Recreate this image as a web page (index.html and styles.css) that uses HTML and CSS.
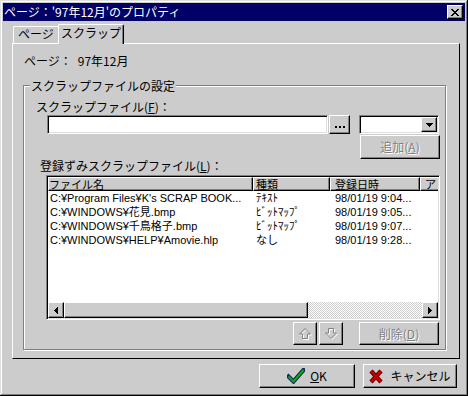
FILE: index.html
```html
<!DOCTYPE html>
<html lang="ja">
<head>
<meta charset="utf-8">
<title>ページ：'97年12月'のプロパティ</title>
<link rel="stylesheet" href="styles.css">
</head>
<body>
<div class="window">
  <div class="titlebar">
    <span class="title">ページ：'97年12月'のプロパティ</span>
    <button class="raised close-btn" aria-label="閉じる">
      <svg width="8" height="7" viewBox="0 0 8 7" shape-rendering="crispEdges">
        <rect x="0" y="0" width="2" height="1"/><rect x="6" y="0" width="2" height="1"/>
        <rect x="1" y="1" width="2" height="1"/><rect x="5" y="1" width="2" height="1"/>
        <rect x="2" y="2" width="4" height="1"/>
        <rect x="3" y="3" width="2" height="1"/>
        <rect x="2" y="4" width="4" height="1"/>
        <rect x="1" y="5" width="2" height="1"/><rect x="5" y="5" width="2" height="1"/>
        <rect x="0" y="6" width="2" height="1"/><rect x="6" y="6" width="2" height="1"/>
      </svg>
    </button>
  </div>

  <div class="tabs">
    <div class="tab first">ページ</div>
    <div class="tab active">スクラップ</div>
  </div>

  <div class="panel">
    <div class="pageline"><span>ページ：</span><span class="pageval">97年12月</span></div>

    <fieldset class="group">
      <legend class="group-title">スクラップファイルの設定</legend>

      <div class="label l1">スクラップファイル(<u>F</u>)：</div>
      <div class="filerow">
        <div class="sunken textbox"></div>
        <button class="raised browse" aria-label="参照">
          <svg width="10" height="2" viewBox="0 0 10 2" shape-rendering="crispEdges">
            <rect x="0" y="0" width="2" height="2"/><rect x="4" y="0" width="2" height="2"/><rect x="8" y="0" width="2" height="2"/>
          </svg>
        </button>
        <div class="sunken combo">
          <span class="raised combo-btn">
            <svg width="7" height="4" viewBox="0 0 7 4" shape-rendering="crispEdges">
              <rect x="0" y="0" width="7" height="1"/><rect x="1" y="1" width="5" height="1"/>
              <rect x="2" y="2" width="3" height="1"/><rect x="3" y="3" width="1" height="1"/>
            </svg>
          </span>
        </div>
      </div>
      <button class="raised add disabled" disabled>追加(<u>A</u>)</button>

      <div class="label l2">登録ずみスクラップファイル(<u>L</u>)：</div>
      <div class="sunken list">
        <div class="lv-header">
          <div class="hcell c1">ファイル名</div>
          <div class="hcell c2">種類</div>
          <div class="hcell c3">登録日時</div>
          <div class="hcell c4">ア</div>
        </div>
        <div class="lv-body">
          <div class="row"><span class="c1">C:¥Program Files¥K's SCRAP BOOK...</span><span class="c2">ﾃｷｽﾄ</span><span class="c3">98/01/19 9:04...</span></div>
          <div class="row"><span class="c1">C:¥WINDOWS¥花見.bmp</span><span class="c2">ﾋﾞｯﾄﾏｯﾌﾟ</span><span class="c3">98/01/19 9:05...</span></div>
          <div class="row"><span class="c1">C:¥WINDOWS¥千鳥格子.bmp</span><span class="c2">ﾋﾞｯﾄﾏｯﾌﾟ</span><span class="c3">98/01/19 9:07...</span></div>
          <div class="row"><span class="c1">C:¥WINDOWS¥HELP¥Amovie.hlp</span><span class="c2">なし</span><span class="c3">98/01/19 9:28...</span></div>
        </div>
        <div class="hscroll">
          <span class="raised sbtn">
            <svg width="4" height="7" viewBox="0 0 4 7" shape-rendering="crispEdges">
              <rect x="3" y="0" width="1" height="7"/><rect x="2" y="1" width="1" height="5"/>
              <rect x="1" y="2" width="1" height="3"/><rect x="0" y="3" width="1" height="1"/>
            </svg>
          </span>
          <span class="raised thumb"></span>
          <span class="track"></span>
          <span class="raised sbtn">
            <svg width="4" height="7" viewBox="0 0 4 7" shape-rendering="crispEdges">
              <rect x="0" y="0" width="1" height="7"/><rect x="1" y="1" width="1" height="5"/>
              <rect x="2" y="2" width="1" height="3"/><rect x="3" y="3" width="1" height="1"/>
            </svg>
          </span>
        </div>
      </div>

      <div class="listbtns">
        <button class="raised arrowbtn" disabled aria-label="上へ">
          <svg width="13" height="12" viewBox="0 0 13 12">
            <polygon transform="translate(1,1)" points="6,0.5 11.5,6 8.5,6 8.5,10.5 3.5,10.5 3.5,6 0.5,6" fill="none" stroke="#fff"/>
            <polygon points="6,0.5 11.5,6 8.5,6 8.5,10.5 3.5,10.5 3.5,6 0.5,6" fill="none" stroke="#808080"/>
          </svg>
        </button>
        <button class="raised arrowbtn down" disabled aria-label="下へ">
          <svg width="13" height="12" viewBox="0 0 13 12">
            <polygon transform="translate(1,1)" points="3.5,0.5 8.5,0.5 8.5,5 11.5,5 6,10.5 0.5,5 3.5,5" fill="none" stroke="#fff"/>
            <polygon points="3.5,0.5 8.5,0.5 8.5,5 11.5,5 6,10.5 0.5,5 3.5,5" fill="none" stroke="#808080"/>
          </svg>
        </button>
        <button class="raised del disabled" disabled>削除(<u>D</u>)</button>
      </div>
    </fieldset>
  </div>

  <div class="footer">
    <button class="raised dlgbtn ok">
      <svg width="18" height="16" viewBox="0 0 18 16">
        <path d="M1.5 8.5 L6.5 13.5 L16.5 2" fill="none" stroke="#10285a" stroke-width="4.2" stroke-linecap="square"/>
        <path d="M1.5 8.5 L6.5 13.5 L16.5 2" fill="none" stroke="#10a818" stroke-width="2"/>
      </svg>
      <span><u>O</u>K</span>
    </button>
    <button class="raised dlgbtn cancel">
      <svg width="14" height="15" viewBox="0 0 14 15">
        <path d="M2 2 L12 13 M12 2 L2 13" fill="none" stroke="#700000" stroke-width="4.4"/>
        <path d="M2 2 L12 13 M12 2 L2 13" fill="none" stroke="#c80000" stroke-width="2"/>
      </svg>
      <span>キャンセル</span>
    </button>
  </div>
</div>
</body>
</html>
```

FILE: styles.css
```css
* { box-sizing: border-box; }
html, body { margin: 0; padding: 0; }
body {
  width: 468px;
  height: 396px;
  overflow: hidden;
  background: #cccccc;
  font-family: "Noto Sans CJK JP", "Noto Sans", sans-serif;
  font-size: 12px;
  line-height: 14px;
  color: #000;
}
button {
  font: inherit;
  color: inherit;
  margin: 0;
  padding: 0;
  background: #cccccc;
}
u { text-decoration: underline; text-underline-offset: 1px; }

.window {
  width: 468px;
  height: 396px;
  padding: 3px;
  background: #cccccc;
  box-shadow: inset -1px -1px 0 #000, inset 1px 1px 0 #dfdfdf,
              inset -2px -2px 0 #808080, inset 2px 2px 0 #fff;
  display: flex;
  flex-direction: column;
}

.raised {
  border: 1px solid;
  border-color: #fff #000 #000 #fff;
  box-shadow: inset -1px -1px 0 #808080;
  background: #cccccc;
}
.sunken {
  border: 1px solid;
  border-color: #808080 #fff #fff #808080;
  box-shadow: inset 1px 1px 0 #000, inset -1px -1px 0 #dfdfdf;
  background: #fff;
}
.disabled { color: #808080; text-shadow: 1px 1px 0 #fff; }

/* title bar */
.titlebar {
  height: 18px;
  background: #000066;
  color: #fff;
  display: flex;
  align-items: center;
  justify-content: space-between;
  padding: 0 2px 0 1px;
  flex-shrink: 0;
}
.title { line-height: 18px; white-space: nowrap; }
.close-btn {
  width: 16px;
  height: 14px;
  display: flex;
  align-items: center;
  justify-content: center;
  padding-right: 1px;
}

/* tabs */
.tabs {
  display: flex;
  align-items: flex-end;
  height: 19px;
  margin: 3px 0 0 10px;
  flex-shrink: 0;
}
.tab {
  height: 17px;
  border-top: 1px solid #fff;
  border-left: 1px solid #fff;
  border-right: 1px solid #000;
  box-shadow: inset -1px 0 0 #808080;
  border-radius: 2px 2px 0 0;
  display: flex;
  align-items: center;
  justify-content: center;
  padding-bottom: 2px;
  white-space: nowrap;
}
.tab.first {
  width: 45px;
  border-right: none;
  box-shadow: none;
  border-top-right-radius: 0;
}
.tab.active {
  width: 66px;
  height: 20px;
  margin-bottom: -1px;
  padding-bottom: 3px;
  position: relative;
  z-index: 1;
  background: #cccccc;
}

/* panel */
.panel {
  margin-left: 9px;
  width: 448px;
  height: 316px;
  border: 1px solid;
  border-color: #fff #000 #000 #fff;
  flex-shrink: 0;
}
.pageline { display: flex; margin: 10px 0 0 11px; white-space: nowrap; }
.pageval { margin-left: 6px; }

.group {
  margin: 11px 0 0 10px;
  width: 423px;
  min-width: 0;
  padding: 0 0 4px 0;
  border: 1px solid #808080;
  box-shadow: inset 1px 1px 0 #fff, 1px 1px 0 #fff;
}
.group-title {
  margin-left: 6px;
  padding: 0 1px;
  line-height: 13px;
  background: #cccccc;
  white-space: nowrap;
}
.label { line-height: 14px; white-space: nowrap; }
.l1 { margin: 8px 0 0 12px; }
.l2 { margin: 0 0 0 16px; }

.filerow { display: flex; height: 19px; margin: 1px 0 0 23px; }
.textbox { width: 281px; height: 19px; }
.browse {
  width: 21px;
  height: 19px;
  margin-left: 1px;
  display: flex;
  align-items: center;
  justify-content: center;
  padding-top: 5px;
}
.combo {
  width: 80px;
  height: 19px;
  margin-left: 9px;
  padding: 1px;
  display: flex;
  justify-content: flex-end;
}
.combo-btn {
  width: 16px;
  height: 15px;
  display: flex;
  align-items: center;
  justify-content: center;
}
.add {
  display: block;
  width: 80px;
  height: 24px;
  margin: 1px 0 0 336px;
}

/* list view */
.list {
  margin: 2px 0 0 22px;
  width: 394px;
  height: 145px;
  padding: 1px;
  display: flex;
  flex-direction: column;
}
.lv-header {
  display: flex;
  height: 14px;
  flex-shrink: 0;
  overflow: hidden;
  background: #cccccc;
}
.hcell {
  flex-shrink: 0;
  height: 14px;
  border: 1px solid;
  border-color: #fff #000 #000 #fff;
  box-shadow: inset -1px -1px 0 #808080;
  font-size: 11px;
  line-height: 12px;
  white-space: nowrap;
  padding-left: 2px;
}
.hcell.c1 { padding-left: 0; }
.hcell.c3 { padding-left: 4px; }
.hcell.c4 { padding-left: 4px; }
.c1 { width: 205px; }
.c2 { width: 77px; }
.c3 { width: 90px; }
.c4 { width: 50px; }

.lv-body {
  flex: 1;
  background: #fff;
  font-family: "Liberation Sans", "Noto Sans CJK JP", sans-serif;
  font-size: 11px;
}
.row { display: flex; height: 14px; line-height: 14px; white-space: nowrap; }
.row span { flex-shrink: 0; overflow: hidden; }
.row .c1 { padding-left: 2px; }
.row .c2 { padding-left: 3px; }
.row .c3 { padding-left: 5px; }

.hscroll { display: flex; height: 16px; flex-shrink: 0; }
.sbtn {
  width: 16px;
  height: 16px;
  flex-shrink: 0;
  display: flex;
  align-items: center;
  justify-content: center;
}
.thumb { width: 244px; height: 16px; flex-shrink: 0; }
.track {
  flex: 1;
  background: repeating-conic-gradient(#fff 0 25%, #cccccc 0 50%) 0 0 / 2px 2px;
}

.listbtns { display: flex; margin: 2px 0 0 269px; height: 23px; }
.arrowbtn {
  width: 24px;
  height: 23px;
  display: flex;
  align-items: center;
  justify-content: center;
}
.arrowbtn.down { margin-left: 2px; }
.del { width: 80px; height: 23px; margin-left: 16px; }

/* footer */
.footer {
  display: flex;
  justify-content: flex-end;
  gap: 8px;
  margin-top: 5px;
  padding-right: 8px;
  flex-shrink: 0;
}
.dlgbtn {
  height: 24px;
  display: flex;
  align-items: center;
  justify-content: center;
  gap: 5px;
}
.ok { width: 96px; }
.cancel { width: 94px; gap: 7px; }
```
